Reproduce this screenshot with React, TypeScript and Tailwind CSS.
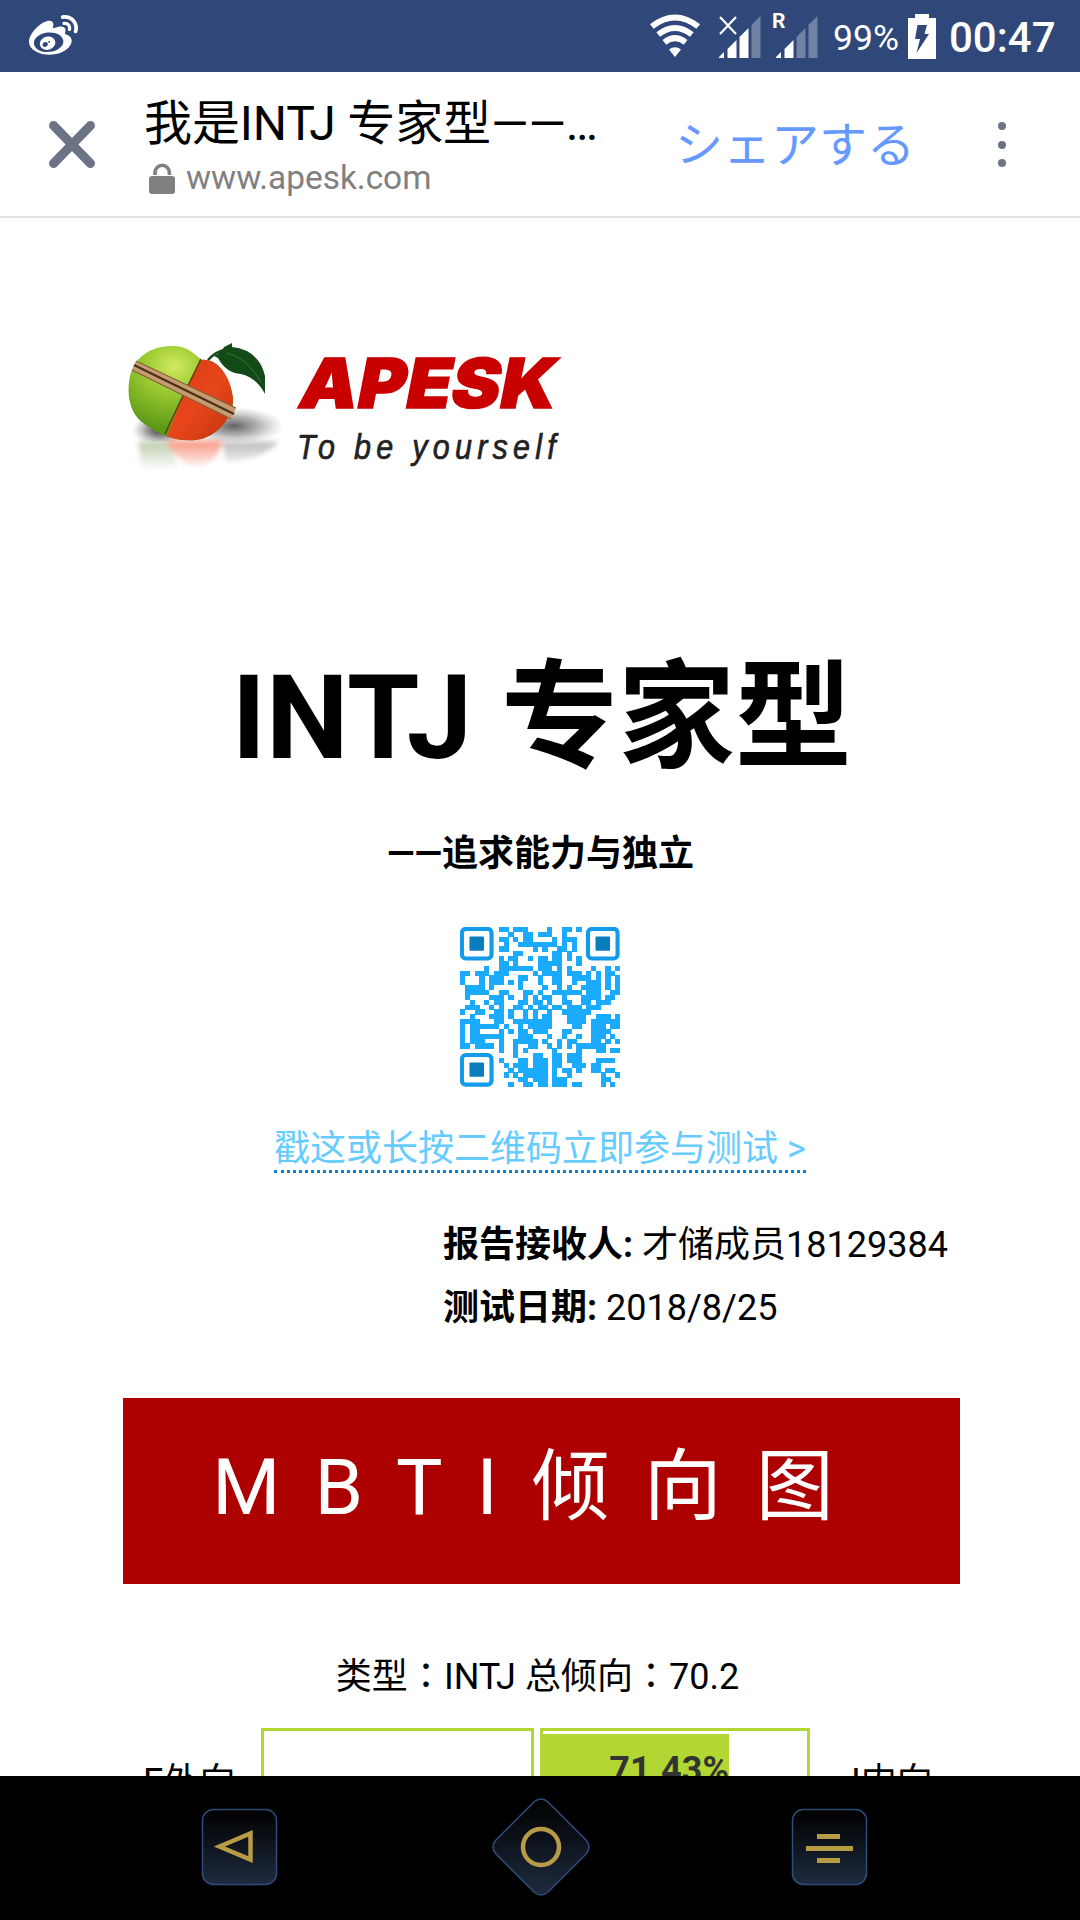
import { FaWeibo } from "react-icons/fa";

const N = 33;
const QR_ROWS: number[][] = [
  [8, 9, 11, 12, 13, 18, 21, 22, 24],
  [10, 13, 14, 16, 17, 18, 21],
  [8, 9, 11, 13, 14, 19, 21, 22, 23],
  [9, 12, 13, 14, 15, 16, 17, 18, 19, 21, 23],
  [8, 9, 15, 17, 20, 21, 23],
  [11, 12, 19, 20, 22],
  [8, 10, 11, 14, 16, 17, 19, 20, 22, 24],
  [8, 9, 11, 16, 17, 18, 19, 20, 24],
  [5, 8, 9, 10, 11, 12, 13, 14, 16, 17, 18, 20, 22, 27, 30, 32],
  [0, 1, 3, 4, 5, 7, 8, 9, 15, 17, 18, 19, 20, 22, 23, 24, 26, 28, 30, 31],
  [0, 4, 6, 7, 8, 12, 13, 16, 19, 20, 23, 24, 25, 26, 28, 30, 32],
  [0, 4, 6, 7, 8, 10, 12, 16, 19, 20, 23, 26, 27, 28, 30, 32],
  [1, 2, 3, 4, 6, 12, 17, 20, 22, 25, 26, 27, 28, 30, 32],
  [1, 2, 3, 4, 5, 8, 9, 13, 14, 16, 19, 20, 21, 22, 23, 24, 26, 27, 28, 31, 32],
  [1, 6, 7, 8, 10, 13, 15, 17, 18, 21, 25, 26, 27, 28, 30, 31],
  [2, 5, 7, 8, 12, 13, 15, 16, 18, 21, 22, 25, 26, 28, 29, 30],
  [1, 2, 3, 6, 8, 11, 12, 14, 16, 17, 19, 20, 22, 23, 24, 26, 27, 28],
  [0, 3, 4, 7, 8, 10, 13, 15, 18, 21, 22, 23, 24, 25, 26],
  [2, 6, 7, 8, 10, 13, 15, 17, 18, 22, 23, 24, 25, 28, 29, 30, 32],
  [0, 1, 2, 3, 7, 8, 11, 12, 13, 14, 15, 16, 17, 18, 22, 23, 24, 25, 27, 28, 29, 30, 31, 32],
  [0, 2, 3, 4, 5, 6, 7, 9, 12, 14, 15, 16, 17, 18, 23, 24, 27, 28, 29, 31, 32],
  [0, 2, 3, 8, 10, 12, 13, 15, 16, 17, 21, 22, 27, 28, 29, 30],
  [0, 2, 3, 4, 5, 6, 7, 8, 12, 13, 14, 18, 21, 24, 27, 28, 29, 31],
  [0, 2, 3, 4, 8, 11, 12, 13, 14, 15, 17, 20, 22, 23, 27, 28, 30, 32],
  [0, 1, 3, 4, 5, 6, 8, 11, 14, 15, 18, 20, 22, 24, 25, 26, 27, 28, 29],
  [8, 11, 13, 19, 24, 28, 29, 31, 32],
  [11, 15, 16, 19, 20, 22, 23, 24],
  [8, 12, 13, 15, 16, 17, 19, 20, 22, 23, 24, 28, 29, 30, 31],
  [9, 11, 12, 13, 15, 16, 17, 19, 20, 23, 24, 25, 27, 28],
  [10, 12, 13, 14, 15, 16, 17, 19, 21, 22, 24, 27, 28, 30, 31],
  [9, 11, 13, 14, 15, 16, 17, 19, 22, 29, 32],
  [12, 13, 15, 16, 17, 19, 20, 21, 29, 30],
  [10, 13, 14, 16, 17, 19, 20, 21, 23, 24, 29, 31],
];
const FINDERS = [[0, 0], [26, 0], [0, 26]];

function QrCode() {
  return (
    <svg className="block h-[160px] w-[160px]" viewBox={`0 0 ${N} ${N}`}>
      <path
        d={QR_ROWS.map((row, y) => row.map((x) => `M${x} ${y}h1.06v1.06h-1.06z`).join("")).join("")}
        fill="#1aabff"
        shapeRendering="crispEdges"
      />
      {FINDERS.map(([x, y]) => (
        <g key={`${x}-${y}`}>
          <rect x={x + 0.4} y={y + 0.4} width={6.1} height={6.1} rx={0.8} fill="#fff" stroke="#129aeb" strokeWidth={0.85} />
          <rect x={x + 1.95} y={y + 1.95} width={3} height={2.95} rx={0.2} fill="#0a7ebd" />
        </g>
      ))}
    </svg>
  );
}

function WifiIcon() {
  return (
    <svg className="ml-[571px] h-[44px] w-[52px]" viewBox="0 0 52 44">
      <g fill="none" stroke="#fff" strokeWidth="6">
        <path d="M2.8 12.5Q26 -5.5 49.2 12.5" />
        <path d="M9.2 20.5Q26 7.5 42.8 20.5" />
        <path d="M15.4 28.3Q26 20 36.6 28.3" />
      </g>
      <path d="M20 35.5Q26 31 32 35.5L26 43Z" fill="#fff" />
    </svg>
  );
}

function Signal({ level, mark, className }: { level: number; mark: "x" | "R"; className: string }) {
  const bars = [
    "M0 46V45L5 40V46Z",
    "M8.5 46V37L17.5 28V46Z",
    "M20.5 46V25L29.5 16V46Z",
    "M32.5 46V13L41.5 4V46Z",
  ];
  return (
    <svg className={className} viewBox="0 0 42 48">
      {bars.map((d, i) => (
        <path key={d} d={d} fill="#fff" fillOpacity={i < level ? 1 : 0.32} />
      ))}
      {mark === "x" ? (
        <path d="M1 5L17 22M17 5L1 22" stroke="#fff" strokeWidth="2.2" />
      ) : (
        <text x="-4" y="16" fill="#fff" fontSize="21" fontWeight="700" fontFamily="Roboto">R</text>
      )}
    </svg>
  );
}

function StatusBar() {
  return (
    <div className="flex h-[72px] items-center bg-[#30477a] pl-[29px] text-white">
      <FaWeibo className="h-[49px] w-[49px] shrink-0" preserveAspectRatio="none" />
      <WifiIcon />
      <Signal className="ml-[18px] h-12 w-[42px] overflow-visible" level={3} mark="x" />
      <Signal className="ml-[15px] h-12 w-[42px] overflow-visible" level={2} mark="R" />
      <span className="ml-[15px] mt-[4px] w-[66px] whitespace-nowrap text-[35.5px] leading-[40px]">99%</span>
      <svg className="ml-[9px] h-[45px] w-7" viewBox="0 0 28 45">
        <path d="M7 0H21V4H28V45H0V4H7Z" fill="#fff" />
        <path d="M9.5 11H19L16.5 20H21L8.5 39L12 25H7Z" fill="#30477a" />
      </svg>
      <span className="ml-[13px] mt-[4px] whitespace-nowrap text-[42px] leading-[48px] font-medium">00:47</span>
    </div>
  );
}

function Toolbar() {
  return (
    <div className="flex h-[146px] border-b-2 border-[#e4e4e4]">
      <svg className="mt-[49px] ml-[49px] h-[47px] w-[46px] shrink-0" viewBox="0 0 46 47">
        <path d="M4.5 4.5L41.5 42.5M41.5 4.5L4.5 42.5" stroke="#6b7385" strokeWidth="9" strokeLinecap="round" />
      </svg>
      <div className="ml-[49px] w-[531px] whitespace-nowrap pt-[17px]">
        <div className="h-[68px] text-[48px] leading-[70px] tracking-[-0.1px] text-black">我是INTJ 专家型——…</div>
        <div className="flex h-[42px] items-center text-[33.4px] leading-[42px] text-[#808080]">
          <svg className="ml-[5px] h-[31px] w-[26px]" viewBox="0 0 26 31">
            <rect y="13" width="26" height="18" rx="3" fill="#808080" />
            <path d="M6 12V9.5A7.2 7.2 0 0 1 20.4 9.5V12" fill="none" stroke="#808080" strokeWidth="3.6" />
          </svg>
          <span className="ml-[11px]">www.apesk.com</span>
        </div>
      </div>
      <div className="w-[236px] whitespace-nowrap pt-[34px] font-['Noto_Sans_CJK_JP',sans-serif] text-[48px] leading-[70px] text-[#6699ff]">シェアする</div>
      <div className="mt-[50px] ml-[87px] flex flex-col gap-[10.5px]">
        <i className="size-2 rounded-full bg-[#6b7385]" />
        <i className="size-2 rounded-full bg-[#6b7385]" />
        <i className="size-2 rounded-full bg-[#6b7385]" />
      </div>
    </div>
  );
}

function Logo() {
  return (
    <svg className="block h-[160px] w-[480px]" viewBox="0 0 480 160">
      <defs>
        <radialGradient id="green" cx="0.45" cy="0.25" r="0.6">
          <stop offset="0" stopColor="#d3e965" />
          <stop offset="0.35" stopColor="#a2cf35" />
          <stop offset="1" stopColor="#5f9a17" />
        </radialGradient>
        <linearGradient id="red" x1="0" y1="0" x2="1" y2="1">
          <stop offset="0" stopColor="#d93d12" />
          <stop offset="0.5" stopColor="#e8451a" />
          <stop offset="1" stopColor="#b8300c" />
        </linearGradient>
        <linearGradient id="fade" x1="0" y1="0" x2="0" y2="1">
          <stop offset="0" stopColor="#fff" stopOpacity="0.2" />
          <stop offset="0.75" stopColor="#fff" />
        </linearGradient>
        <radialGradient id="shade">
          <stop offset="0" stopColor="#222" stopOpacity="0.9" />
          <stop offset="0.5" stopColor="#444" stopOpacity="0.5" />
          <stop offset="1" stopColor="#777" stopOpacity="0" />
        </radialGradient>
        <filter id="soft"><feGaussianBlur stdDeviation="2.4" /></filter>
        <clipPath id="apple">
          <path d="M20 56C26 34 44 26 62 26C78 26 84 34 92 40C106 38 120 54 123 78C124 98 106 118 86 120C66 122 50 115 36 105C20 95 16 76 20 56Z" />
        </clipPath>
      </defs>
      <ellipse cx="124" cy="106" rx="50" ry="19" fill="url(#shade)" opacity="0.8" />
      <ellipse cx="50" cy="110" rx="28" ry="16" fill="url(#shade)" />
      <g filter="url(#soft)">
        <path d="M28 122H60L68 150H32Z" fill="#aabf98" />
        <path d="M56 121H112Q110 142 86 148Q66 142 56 121Z" fill="#f57c63" />
        <path d="M112 122H168Q154 140 116 142Z" fill="#aaa" />
      </g>
      <rect x="10" y="121" width="170" height="39" fill="url(#fade)" />
      <g clipPath="url(#apple)">
        <rect x="10" y="20" width="120" height="104" fill="url(#green)" />
        <path d="M92 36L134 40V124H54L72 78Z" fill="url(#red)" />
        <path d="M92 37L70 82L55 114" fill="none" stroke="#5d3c10" strokeWidth="1.5" />
      </g>
      <path d="M26 41L126 88L122 99L22 50Z" fill="#c69b6d" />
      <path d="M24 45L124 94" stroke="#49301c" strokeWidth="2.2" />
      <path d="M26 41L126 88M22 50L121 99" stroke="#80603d" strokeWidth="1.2" />
      <path d="M98 40Q106 31 118 29" fill="none" stroke="#164b25" strokeWidth="2.5" />
      <path d="M104 36Q112 32 114 27L122 23L122 27Q149 30 155 56V74Q147 58 131 54Q116 53 108 38Z" fill="#144a18" />
      <path d="M116 33Q136 37 151 62" fill="none" stroke="#2f6c30" strokeWidth="1.2" />
      <text transform="translate(186 88) skewX(-11)" textLength="257" lengthAdjust="spacingAndGlyphs" fontFamily="Inter" fontWeight="900" fontSize="69" fill="#c80000" stroke="#c80000" strokeWidth="1.4">APESK</text>
      <text transform="translate(187 138.5) scale(0.86 1)" textLength="301" fontFamily="Liberation Sans" fontStyle="italic" fontSize="35.5" fill="#222" stroke="#222" strokeWidth="0.7">To be yourself</text>
    </svg>
  );
}

function NavBar() {
  const tile = "h-[78px] w-[77px] overflow-visible";
  return (
    <div className="flex h-[144px] items-center justify-between bg-black pb-[2px] pl-[201px] pr-[212px]">
      <svg className={tile} viewBox="0 0 77 78">
        <defs>
          <linearGradient id="tile" x1="0" y1="0" x2="0" y2="1">
            <stop offset="0" stopColor="#000" />
            <stop offset="1" stopColor="#1e2b3f" />
          </linearGradient>
        </defs>
        <rect x="1.5" y="1.5" width="74" height="75" rx="11" fill="url(#tile)" stroke="#2f4d7a" strokeWidth="1.5" />
        <path d="M18.5 38.5L49.5 25.5V51.5Z" fill="none" stroke="#b89b45" strokeWidth="4.5" />
      </svg>
      <svg className="ml-[12px] h-[98px] w-[98px]" viewBox="0 0 98 98">
        <path d="M42 4Q49 -2 56 4L94 42Q100 49 94 56L56 94Q49 100 42 94L4 56Q-2 49 4 42Z" fill="url(#tile)" stroke="#2f4d7a" strokeWidth="1.5" />
        <circle cx="49" cy="49" r="18" fill="none" stroke="#b89b45" strokeWidth="4.5" />
      </svg>
      <svg className={tile} viewBox="0 0 77 78">
        <rect x="1.5" y="1.5" width="74" height="75" rx="11" fill="url(#tile)" stroke="#2f4d7a" strokeWidth="1.5" />
        <path d="M26 28.5H49M15 40.5H62M26 52.5H49" stroke="#b89b45" strokeWidth="4.8" />
      </svg>
    </div>
  );
}

function WideColon() {
  return <span className="font-['Noto_Sans_CJK_TC',sans-serif] leading-none" lang="zh-TW">：</span>;
}

export default function App() {
  return (
    <div className="flex h-[1920px] w-[1080px] flex-col overflow-hidden bg-white font-['Roboto','Noto_Sans_CJK_SC',sans-serif] text-black">
      <StatusBar />
      <Toolbar />
      <main className="flex h-[1558px] flex-col items-center overflow-hidden whitespace-nowrap text-[36px]">
        <div className="mt-[102px] self-start pl-[110px]">
          <Logo />
        </div>
        <h1 className="mt-[151px] ml-[4px] h-[174px] text-[117px] leading-[174px] font-bold">INTJ 专家型</h1>
        <p className="mt-[22px] ml-px h-[54px] leading-[54px] font-bold">——追求能力与独立</p>
        <div className="mt-[46px]">
          <QrCode />
        </div>
        <a className="mt-[33px] h-[53px] border-b-[3px] border-dotted border-[#0a82c8] leading-[58px] text-[#66ccff]">戳这或长按二维码立即参与测试 &gt;</a>
        <div className="mt-[41px] ml-[443px] self-start leading-[63px]">
          <p><b>报告接收人:</b> 才储成员18129384</p>
          <p><b>测试日期:</b> 2018/8/25</p>
        </div>
        <div className="mt-[58px] ml-[2px] flex h-[186px] w-[837px] shrink-0 justify-center bg-[#ad0000] pr-[2px] text-[78px] leading-[180px] tracking-[34px] text-white">MBTI倾向图</div>
        <p className="mt-[66px] ml-[-5px] h-[54px] leading-[54px]">
          类型<WideColon />INTJ 总倾向<WideColon />70.2
        </p>
        <div className="mt-[24px] flex h-[90px] w-full shrink-0">
          <span className="w-[261px] pt-[27px] pl-[143px] leading-[54px]">E外向</span>
          <div className="w-[273px] border-[3px] border-[#b2d732]" />
          <div className="ml-[6px] w-[270px] border-[3px] border-[#b2d732] pt-[3px]">
            <div className="flex h-20 w-[186px] justify-end bg-[#b2d732] pt-[9px] leading-[54px] font-bold text-[#333]">71.43%</div>
          </div>
          <span className="ml-[41px] pt-[27px] leading-[54px]">I内向</span>
        </div>
      </main>
      <NavBar />
    </div>
  );
}
